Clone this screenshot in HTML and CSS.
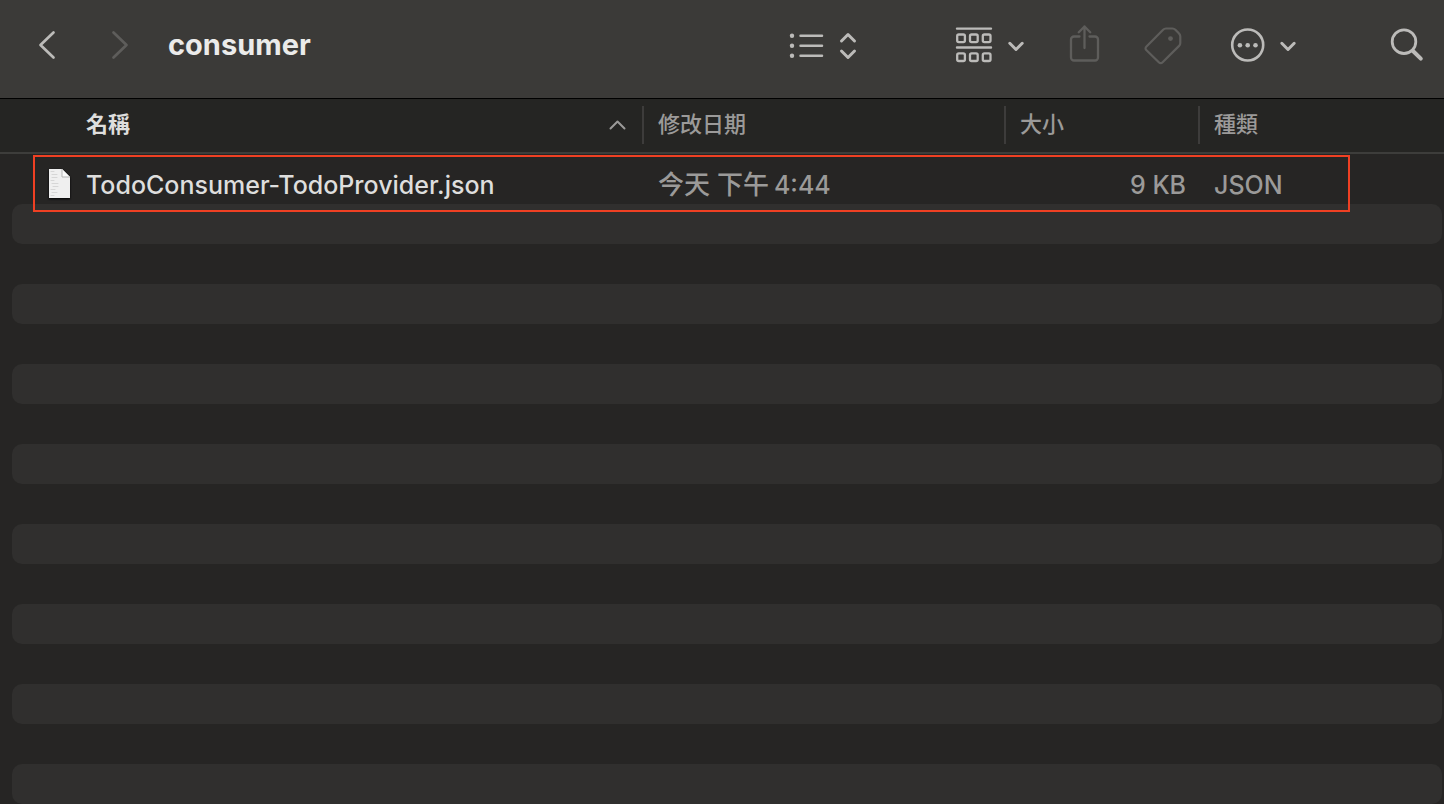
FILE: index.html
```html
<!DOCTYPE html>
<html lang="zh-Hant">
<head>
<meta charset="utf-8">
<meta name="viewport" content="width=device-width, initial-scale=1">
<title>consumer</title>
<link rel="stylesheet" href="styles.css">
</head>
<body>
<div class="window">
  <header class="toolbar">
    <nav class="history">
      <button class="tool" type="button" aria-label="返回">
        <svg width="22" height="40" viewBox="0 0 22 40"><path d="M17.500 7.500 4.500 20l13 12.500" stroke-width="2.700"/></svg>
      </button>
      <button class="tool tool-dim" type="button" aria-label="往前" disabled>
        <svg width="22" height="40" viewBox="0 0 22 40"><path d="M4.500 7.500 17.500 20l-13 12.500" stroke-width="2.700"/></svg>
      </button>
    </nav>
    <h1 class="title">consumer</h1>
    <button class="tool tool-view" type="button" aria-label="顯示方式">
      <svg width="72" height="40" viewBox="0 0 72 40">
        <path d="M12.500 10.700H34M12.500 20.700H34M12.500 30.700H34" stroke-width="2.500"/>
        <g class="solid"><circle cx="4" cy="10.700" r="2.200"/><circle cx="4" cy="20.700" r="2.200"/><circle cx="4" cy="30.700" r="2.200"/></g>
        <path d="m53.500 16 6.500-6.500 6.500 6.500M53.500 26l6.500 6.500 6.500-6.500" stroke-width="3"/>
      </svg>
    </button>
    <button class="tool tool-group" type="button" aria-label="群組">
      <svg width="72" height="40" viewBox="0 0 72 40">
        <path d="M3 3.600h34M3 22.500h34" stroke-width="2.400"/>
        <g stroke-width="2.300">
          <rect x="3.200" y="9.500" width="7.700" height="7.700" rx="1.600"/><rect x="16" y="9.500" width="7.700" height="7.700" rx="1.600"/><rect x="28.800" y="9.500" width="7.700" height="7.700" rx="1.600"/>
          <rect x="3.200" y="28.300" width="7.700" height="7.700" rx="1.600"/><rect x="16" y="28.300" width="7.700" height="7.700" rx="1.600"/><rect x="28.800" y="28.300" width="7.700" height="7.700" rx="1.600"/>
        </g>
        <path d="m55.800 18.300 6.200 6.200 6.200-6.200" stroke-width="3"/>
      </svg>
    </button>
    <button class="tool tool-dim tool-share" type="button" aria-label="分享" disabled>
      <svg width="34" height="40" viewBox="0 0 34 40">
        <path d="M11.500 11.500H6a3 3 0 0 0-3 3v18a3 3 0 0 0 3 3h21a3 3 0 0 0 3-3v-18a3 3 0 0 0-3-3h-5.500M16.500 23V1.500M10.800 7.200l5.700-5.700 5.700 5.700" stroke-width="2.300"/>
      </svg>
    </button>
    <button class="tool tool-dim tool-tag" type="button" aria-label="標籤" disabled>
      <svg width="41" height="40" viewBox="0 0 41 40">
        <path d="M23 3.500h6.500q1.700 0 2.900 1.200l3.700 3.900q1.200 1.200 1.200 2.900v6.500q0 1.700-1.200 2.900L19.600 37.200q-1.900 1.900-3.800 0L3.500 25.300q-1.900-1.900 0-3.800L20.100 4.700q1.200-1.200 2.900-1.200z" stroke-width="2.200"/>
        <circle class="solid" cx="27.500" cy="13.600" r="2.400"/>
      </svg>
    </button>
    <button class="tool tool-more" type="button" aria-label="更多">
      <svg width="70" height="40" viewBox="0 0 70 40">
        <circle cx="18.700" cy="20" r="15.500" stroke-width="2.600"/>
        <g class="solid"><circle cx="10.900" cy="20.200" r="2.300"/><circle cx="18.700" cy="20.200" r="2.300"/><circle cx="26.500" cy="20.200" r="2.300"/></g>
        <path d="m52.800 18.300 6.200 6.200 6.200-6.200" stroke-width="3"/>
      </svg>
    </button>
    <button class="tool tool-search" type="button" aria-label="搜尋">
      <svg width="36" height="40" viewBox="0 0 36 40">
        <circle cx="16" cy="16.700" r="11.800" stroke-width="2.800"/>
        <path d="m25 26 7.800 7.700" stroke-width="4"/>
      </svg>
    </button>
  </header>

  <main class="content">
    <table class="files">
      <colgroup><col><col class="col-date"><col class="col-size"><col class="col-kind"></colgroup>
      <thead>
        <tr>
          <th class="sorted" scope="col" aria-sort="ascending">
            <div class="head head-name"><span class="label">名稱</span>
              <svg class="sort" width="17" height="10" viewBox="0 0 17 10"><path d="m1.500 8.500 7-7 7 7" stroke-width="2"/></svg>
            </div>
          </th>
          <th scope="col"><div class="head"><span class="label">修改日期</span></div></th>
          <th scope="col"><div class="head"><span class="label">大小</span></div></th>
          <th scope="col"><div class="head"><span class="label">種類</span></div></th>
        </tr>
      </thead>
      <tbody>
        <tr>
          <td class="name">
            <div class="file">
              <svg class="doc" width="21" height="29" viewBox="0 0 21 29">
                <path d="M0 0h13l8 8v21H0z" fill="#efefef"/>
                <path d="M13 0v8h8z" fill="#fafafa"/>
                <path d="M13 0v8h8" stroke="#b4b4b4"/>
                <path d="M2 2.500h3M3 5.500h5M3 8.500h5M2 11.500h3M3 14.500h6M4 17.500h5M2 20.500h4M3 23.500h5M2 26.500h3" stroke="#d6d6d6"/>
              </svg>
              <span>TodoConsumer-TodoProvider.json</span>
            </div>
          </td>
          <td class="date">今天 下午<span class="clock">4:44</span></td>
          <td class="size">9 KB</td>
          <td>JSON</td>
        </tr>
      </tbody>
    </table>
    <div class="stripes" aria-hidden="true">
      <div class="stripe"></div><div class="stripe"></div><div class="stripe"></div><div class="stripe"></div>
      <div class="stripe"></div><div class="stripe"></div><div class="stripe"></div><div class="stripe"></div>
    </div>
    <div class="highlight" aria-hidden="true"></div>
  </main>
</div>
</body>
</html>
```
FILE: styles.css
```css
* { box-sizing: border-box; }

body {
  margin: 0;
  background: #262524;
  color: #9b9a99;
  font-family: Inter, "Noto Sans CJK TC", sans-serif;
}

.window { min-height: 100vh; }

svg {
  display: block;
  flex: none;
  fill: none;
  stroke: currentColor;
  stroke-linecap: round;
  stroke-linejoin: round;
}

.solid { fill: currentColor; stroke: none; }

.toolbar {
  display: flex;
  align-items: center;
  height: 99px;
  padding: 0 20px 8px 36px;
  background: #3b3a38;
  border-bottom: 1px solid #000;
}

.history { display: flex; gap: 51px; }

.tool {
  flex: none;
  padding: 0;
  border: 0;
  background: none;
  color: #bcbbb9;
}

.tool-dim { color: #5e5d5b; }

.title {
  flex: 1;
  margin: 0 0 0 37px;
  color: #ebebea;
  font-size: 29px;
  line-height: 36px;
  font-weight: 700;
}

.tool-group { margin-left: 94px; }
.tool-share { margin-left: 42px; }
.tool-tag { margin-left: 41px; }
.tool-more { margin-left: 45px; }
.tool-search { margin-left: 89px; }

.content { position: relative; }

.files {
  width: 100%;
  table-layout: fixed;
  border-collapse: separate;
  border-spacing: 0;
}

.col-date { width: 362px; }
.col-size { width: 194px; }
.col-kind { width: 246px; }

.files th {
  height: 55px;
  padding: 7px 0 0;
  background: #252523;
  border-bottom: 2px solid #3d3d3b;
  font-size: 22px;
  font-weight: 500;
  text-align: left;
  vertical-align: top;
}

.head {
  display: flex;
  align-items: center;
  height: 38px;
  padding-left: 14px;
  border-left: 2px solid #3d3c3b;
}

.head-name {
  justify-content: space-between;
  padding: 0 16px 0 86px;
  border-left: 0;
}

.label { padding-bottom: 6px; }

.files .sorted { color: #dededd; font-weight: 700; }

.sort { color: #9b9a99; }

.files td {
  height: 50px;
  padding: 12px 0 0 16px;
  font-size: 25px;
  font-weight: 500;
  line-height: 38px;
  white-space: nowrap;
}

.files .name { padding-left: 49px; color: #dededd; }
.files .date { font-size: 26px; }
.files .size { padding-right: 12px; text-align: right; }

.file { display: flex; align-items: center; gap: 16px; }

.doc { margin-bottom: 4px; stroke: none; filter: drop-shadow(0 1px 1px #000); }

.clock { margin-left: 5px; font-size: 25px; }

.stripes {
  display: flex;
  flex-direction: column;
  gap: 40px;
  padding: 0 2px 0 12px;
}

.stripe { height: 40px; border-radius: 10px; background: #302f2e; }

/* Frame drawn over the first row */
.highlight {
  position: absolute;
  top: 56px;
  left: 33px;
  right: 94px;
  height: 57px;
  border: 2px solid #ef4023;
}
```
